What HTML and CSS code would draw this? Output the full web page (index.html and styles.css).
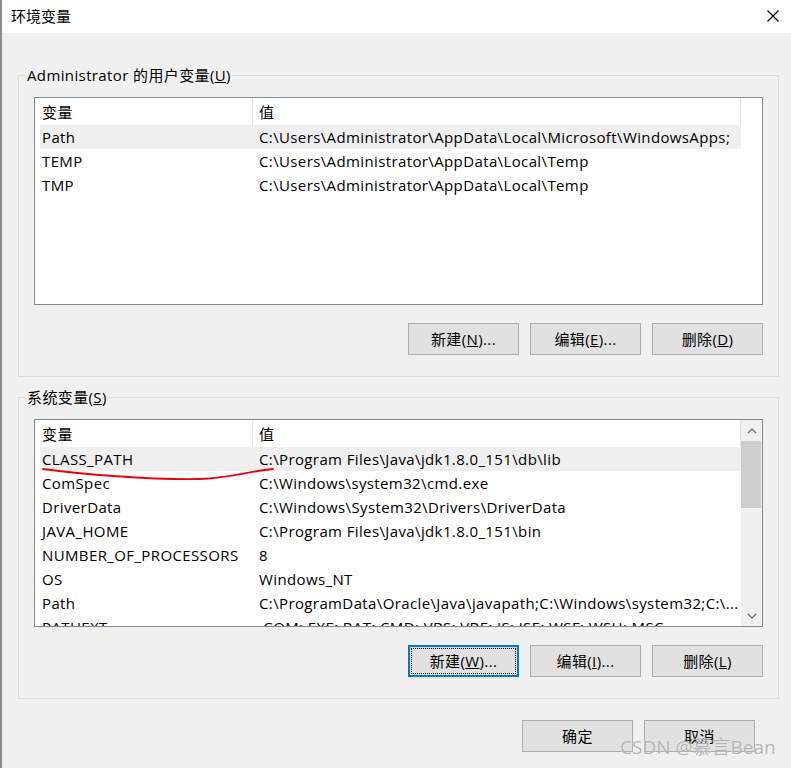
FILE: index.html
```html
<!DOCTYPE html>
<html lang="zh-CN">
<head>
<meta charset="utf-8">
<title>环境变量</title>
<link rel="stylesheet" href="styles.css">
</head>
<body>
<div class="window">
  <div class="titlebar">
    <span class="title">环境变量</span>
    <svg class="close" width="12" height="12" viewBox="0 0 12 12"><path d="M0.5 0.5 L11.5 11.5 M11.5 0.5 L0.5 11.5" stroke="#000" stroke-width="1.1" fill="none"/></svg>
  </div>
  <div class="client">
    <fieldset class="group g1">
      <legend>Administrator 的用户变量(<u>U</u>)</legend>
      <div class="listview">
        <div class="lv-main">
          <div class="lv-header"><div class="hcol h1">变量</div><div class="hcol h2">值</div></div>
          <div class="lv-rows">
            <div class="row sel"><span class="c1">Path</span><span class="c2">C:\Users\Administrator\AppData\Local\Microsoft\WindowsApps;</span></div>
            <div class="row"><span class="c1">TEMP</span><span class="c2">C:\Users\Administrator\AppData\Local\Temp</span></div>
            <div class="row"><span class="c1">TMP</span><span class="c2">C:\Users\Administrator\AppData\Local\Temp</span></div>
          </div>
        </div>
        <div class="lv-gutter"></div>
      </div>
      <div class="btns">
        <button class="btn">新建(<u>N</u>)...</button>
        <button class="btn">编辑(<u>E</u>)...</button>
        <button class="btn">删除(<u>D</u>)</button>
      </div>
    </fieldset>

    <fieldset class="group g2">
      <legend>系统变量(<u>S</u>)</legend>
      <div class="listview">
        <div class="lv-main">
          <div class="lv-header"><div class="hcol h1">变量</div><div class="hcol h2">值</div></div>
          <div class="lv-rows">
            <div class="row sel"><span class="c1">CLASS_PATH</span><span class="c2">C:\Program Files\Java\jdk1.8.0_151\db\lib</span></div>
            <div class="row"><span class="c1">ComSpec</span><span class="c2">C:\Windows\system32\cmd.exe</span></div>
            <div class="row"><span class="c1">DriverData</span><span class="c2">C:\Windows\System32\Drivers\DriverData</span></div>
            <div class="row"><span class="c1">JAVA_HOME</span><span class="c2">C:\Program Files\Java\jdk1.8.0_151\bin</span></div>
            <div class="row"><span class="c1">NUMBER_OF_PROCESSORS</span><span class="c2">8</span></div>
            <div class="row"><span class="c1">OS</span><span class="c2">Windows_NT</span></div>
            <div class="row"><span class="c1">Path</span><span class="c2">C:\ProgramData\Oracle\Java\javapath;C:\Windows\system32;C:\...</span></div>
            <div class="row"><span class="c1">PATHEXT</span><span class="c2">.COM;.EXE;.BAT;.CMD;.VBS;.VBE;.JS;.JSE;.WSF;.WSH;.MSC</span></div>
          </div>
        </div>
        <div class="scrollbar">
          <div class="sb-arrow">
            <svg width="10" height="6" viewBox="0 0 10 6"><path d="M0.8 5.2 L5 1 L9.2 5.2" stroke="#606060" stroke-width="1.2" fill="none"/></svg>
          </div>
          <div class="sb-track"><div class="sb-thumb"></div></div>
          <div class="sb-arrow">
            <svg width="10" height="6" viewBox="0 0 10 6"><path d="M0.8 0.8 L5 5 L9.2 0.8" stroke="#606060" stroke-width="1.2" fill="none"/></svg>
          </div>
        </div>
      </div>
      <div class="btns">
        <button class="btn focused">新建(<u>W</u>)...</button>
        <button class="btn">编辑(<u>I</u>)...</button>
        <button class="btn">删除(<u>L</u>)</button>
      </div>
    </fieldset>

    <div class="dlg-btns">
      <button class="btn">确定</button>
      <button class="btn">取消</button>
    </div>
  </div>

  <svg class="annot" width="791" height="768" viewBox="0 0 791 768">
    <path d="M43 469 C 80 474, 150 480, 200 479 C 232 478, 250 471, 273 469" stroke="#e8000b" stroke-width="1.8" fill="none" stroke-linecap="round"/>
  </svg>
  <div class="watermark">CSDN @慕言Bean</div>
</div>
</body>
</html>
```

FILE: styles.css
```css
* {
  box-sizing: border-box;
}

html, body {
  margin: 0;
  padding: 0;
  background: #f0f0f0;
}

body {
  font-family: "Open Sans", "Noto Sans CJK SC", sans-serif;
  font-size: 15px;
  color: #000;
}

.window {
  position: relative;
  width: 791px;
  height: 768px;
  border-left: 2px solid #8c8c8c;
  background: #f0f0f0;
  overflow: hidden;
}

.titlebar {
  height: 33px;
  background: #fff;
  display: flex;
  align-items: center;
  justify-content: space-between;
  padding: 0 12px 0 9px;
}

.title {
  font-size: 15px;
  line-height: 20px;
  margin-top: -2px;
}

.close {
  display: block;
  margin-top: -1px;
}

.client {
  padding: 0 12px 0 16px;
  letter-spacing: 0.38px;
}

.group {
  margin: 0;
  min-width: 0;
  border: 1px solid #dcdcdc;
  padding: 12px 15px 21px 15px;
}

.g1 {
  margin-top: 32px;
}

.g2 {
  margin-top: 10px;
}

.group legend {
  padding: 0 1px;
  margin-left: -8px;
  line-height: 20px;
  font-size: 15px;
}

.listview {
  height: 208px;
  border: 1px solid #828790;
  background: #fff;
  display: flex;
  overflow: hidden;
}

.lv-main {
  flex: 1;
  min-width: 0;
  overflow: hidden;
}

.lv-gutter {
  width: 21px;
  flex: none;
}

.lv-header {
  display: flex;
  height: 27px;
}

.hcol {
  padding-top: 2px;
  line-height: 25px;
  border-right: 1px solid #e5e5e5;
  white-space: nowrap;
}

.h1 {
  width: 218px;
  padding-left: 7px;
}

.h2 {
  flex: 1;
  padding-left: 6px;
}

.lv-rows {
  margin-left: 5px;
}

.row {
  display: grid;
  grid-template-columns: 213px 1fr;
  height: 24px;
  line-height: 24px;
  white-space: nowrap;
}

.row.sel {
  background: #efefef;
}

.c1 {
  padding-left: 2px;
  overflow: hidden;
}

.c2 {
  padding-left: 6px;
  overflow: hidden;
}

.scrollbar {
  width: 21px;
  flex: none;
  background: #f0f0f0;
  display: flex;
  flex-direction: column;
}

.sb-arrow {
  height: 21px;
  display: flex;
  align-items: center;
  justify-content: center;
  padding-left: 1px;
}

.sb-track {
  flex: 1;
  padding: 0 1px 0 0;
}

.sb-thumb {
  height: 67px;
  background: #cdcdcd;
}

.btns {
  display: flex;
  justify-content: flex-end;
  gap: 11px;
  margin-top: 18px;
}

.btn {
  width: 111px;
  height: 32px;
  padding: 0;
  margin: 0;
  background: #e1e1e1;
  border: 1px solid #adadad;
  border-radius: 0;
  font-family: inherit;
  font-size: 15px;
  letter-spacing: inherit;
  color: #000;
  line-height: 20px;
}

.btn.focused {
  border: 2px solid #0078d7;
  outline: 1px dotted #000;
  outline-offset: -4px;
}

.dlg-btns {
  display: flex;
  justify-content: flex-end;
  gap: 11px;
  margin-top: 21px;
  padding-right: 24px;
}

.annot {
  position: absolute;
  left: -2px;
  top: 0;
  pointer-events: none;
}

.watermark {
  position: absolute;
  left: 618px;
  top: 735px;
  font-size: 19px;
  line-height: 24px;
  color: rgba(120, 120, 120, 0.55);
  text-shadow: 0 0 1px rgba(255, 255, 255, 0.9);
  white-space: nowrap;
  pointer-events: none;
}
```
